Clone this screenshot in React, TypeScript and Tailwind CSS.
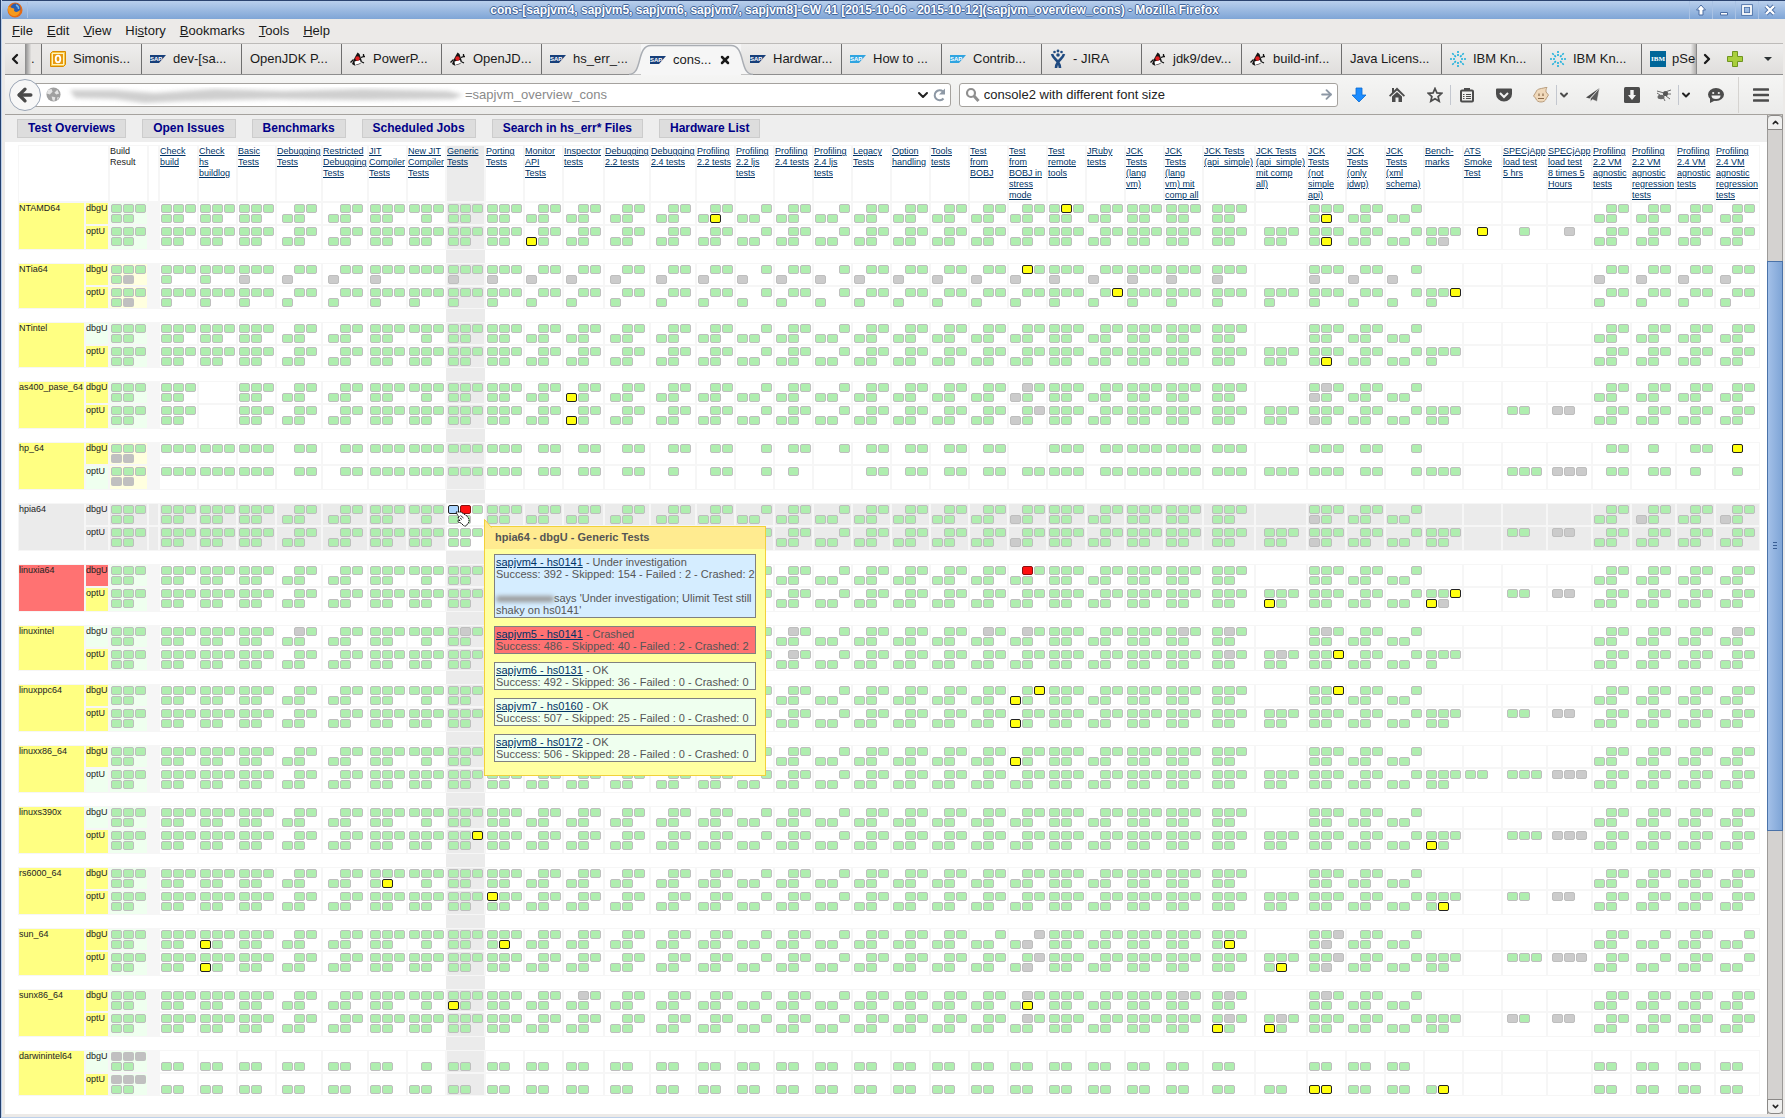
import React from "react";
import { ArrowLeft, ChevronDown, ChevronLeft, ChevronRight, ChevronUp, X } from "lucide-react";

/* ---------- test matrix data ---------- */

// Slots of a cell: sapjvm4, sapjvm5, sapjvm6 / sapjvm7, sapjvm8.
// g = ok, y = warning, r = crashed, b = under investigation, x = not run, X = not built, - = nothing
type Column = { key: string; label: string; width: string; dbg: string; opt: string };

const W39 = "w-[39px]";
const W46 = "w-[46px]";
const FULL = "ggggg";
const NO4 = "-gggg";
const NO45 = "--ggg";

const columns: Column[] = [
  { key: "check", label: "Check\nbuild", width: W39, dbg: FULL, opt: FULL },
  { key: "hs", label: "Check\nhs\nbuildlog", width: W39, dbg: FULL, opt: FULL },
  { key: "basic", label: "Basic\nTests", width: W39, dbg: FULL, opt: FULL },
  { key: "debugging", label: "Debugging\nTests", width: W46, dbg: NO4, opt: NO4 },
  { key: "restricted", label: "Restricted\nDebugging\nTests", width: W46, dbg: NO4, opt: NO4 },
  { key: "jit", label: "JIT\nCompiler\nTests", width: W39, dbg: FULL, opt: FULL },
  { key: "newjit", label: "New JIT\nCompiler\nTests", width: W39, dbg: "ggg-g", opt: FULL },
  { key: "generic", label: "Generic\nTests", width: W39, dbg: FULL, opt: FULL },
  { key: "porting", label: "Porting\nTests", width: W39, dbg: FULL, opt: FULL },
  { key: "monitor", label: "Monitor\nAPI\nTests", width: W39, dbg: NO4, opt: NO4 },
  { key: "inspector", label: "Inspector\ntests", width: "w-[41px]", dbg: NO4, opt: NO4 },
  { key: "dbg22", label: "Debugging\n2.2 tests", width: W46, dbg: NO4, opt: NO4 },
  { key: "dbg24", label: "Debugging\n2.4 tests", width: W46, dbg: NO4, opt: NO4 },
  { key: "p22", label: "Profiling\n2.2 tests", width: W39, dbg: NO4, opt: NO4 },
  { key: "p22l", label: "Profiling\n2.2 ljs\ntests", width: W39, dbg: NO45, opt: NO45 },
  { key: "p24", label: "Profiling\n2.4 tests", width: W39, dbg: NO4, opt: NO4 },
  { key: "p24l", label: "Profiling\n2.4 ljs\ntests", width: W39, dbg: NO45, opt: NO45 },
  { key: "legacy", label: "Legacy\nTests", width: W39, dbg: NO4, opt: NO4 },
  { key: "option", label: "Option\nhandling", width: W39, dbg: NO4, opt: NO4 },
  { key: "tools", label: "Tools\ntests", width: W39, dbg: NO4, opt: NO4 },
  { key: "bobj", label: "Test\nfrom\nBOBJ", width: W39, dbg: NO4, opt: NO4 },
  { key: "stress", label: "Test\nfrom\nBOBJ in\nstress\nmode", width: W39, dbg: NO4, opt: NO4 },
  { key: "remote", label: "Test\nremote\ntools", width: W39, dbg: FULL, opt: FULL },
  { key: "jruby", label: "JRuby\ntests", width: W39, dbg: NO4, opt: NO4 },
  { key: "lang", label: "JCK\nTests\n(lang\nvm)", width: W39, dbg: FULL, opt: FULL },
  { key: "langcomp", label: "JCK\nTests\n(lang\nvm) mit\ncomp all", width: W39, dbg: FULL, opt: FULL },
  { key: "api", label: "JCK Tests\n(api_simple)", width: "w-[52px]", dbg: FULL, opt: FULL },
  { key: "apicomp", label: "JCK Tests\n(api_simple)\nmit comp\nall)", width: "w-[52px]", dbg: "-----", opt: FULL },
  { key: "notsimple", label: "JCK\nTests\n(not\nsimple\napi)", width: W39, dbg: FULL, opt: FULL },
  { key: "jdwp", label: "JCK\nTests\n(only\njdwp)", width: W39, dbg: NO4, opt: NO4 },
  { key: "xml", label: "JCK\nTests\n(xml\nschema)", width: W39, dbg: NO45, opt: NO45 },
  { key: "bench", label: "Bench-\nmarks", width: W39, dbg: "-----", opt: FULL },
  { key: "ats", label: "ATS\nSmoke\nTest", width: W39, dbg: "-----", opt: "-----" },
  { key: "spec5", label: "SPECjApp\nload test\n5 hrs", width: "w-[45px]", dbg: "-----", opt: "-----" },
  { key: "spec8", label: "SPECjApp\nload test\n8 times 5\nHours", width: "w-[45px]", dbg: "-----", opt: "-----" },
  { key: "vm22", label: "Profiling\n2.2 VM\nagnostic\ntests", width: W39, dbg: NO4, opt: NO4 },
  { key: "reg22", label: "Profiling\n2.2 VM\nagnostic\nregression\ntests", width: "w-[45px]", dbg: NO4, opt: NO4 },
  { key: "vm24", label: "Profiling\n2.4 VM\nagnostic\ntests", width: W39, dbg: NO4, opt: NO4 },
  { key: "reg24", label: "Profiling\n2.4 VM\nagnostic\nregression\ntests", width: "w-[45px]", dbg: NO4, opt: NO4 },
];

type Overrides = Record<string, string>;
type Platform = {
  name: string;
  tint: string;
  dbgTint: string;
  optTint: string;
  build?: string;
  buildTint?: string;
  mask?: string;
  short?: boolean;
  hovered?: boolean;
  dbg: Overrides;
  opt: Overrides;
};

const YEL = "bg-[#ffff82]";
const GRN = "bg-[#efffef]";
const RED = "bg-[#ff7272]";
const GRY = "bg-[#ebebeb]";
const CREAM = "bg-[#ffffdf]";

const same = (keys: string[], pattern: string): Overrides =>
  Object.fromEntries(keys.map((k) => [k, pattern]));

const platforms: Platform[] = [
  {
    name: "NTAMD64", tint: YEL, dbgTint: YEL, optTint: YEL,
    dbg: { p22: "-gggy", remote: "gyggg", notsimple: "ggggy" },
    opt: { monitor: "-ggyg", notsimple: "ggggy", bench: "ggggx", ats: "-y---", spec5: "-g---", spec8: "-x---" },
  },
  {
    name: "NTia64", tint: YEL, dbgTint: YEL, optTint: YEL, build: "ggggX", buildTint: CREAM, mask: "11110", short: true,
    dbg: {
      newjit: "ggg--",
      ...same(["basic", "jit", "generic", "porting", "remote", "lang", "langcomp", "api", "notsimple"], "gggx-"),
      ...same(["debugging", "restricted", "monitor", "inspector", "dbg22", "dbg24", "p22", "p24", "legacy", "option", "tools", "bobj", "jruby", "jdwp", "vm22", "reg22", "vm24", "reg24"], "-ggx-"),
      ...same(["p22l", "p24l", "xml"], "--gx-"),
      stress: "-ygx-",
    },
    opt: { jruby: "-gyg-", bench: "ggyg-" },
  },
  {
    name: "NTintel", tint: YEL, dbgTint: GRN, optTint: YEL, short: true,
    dbg: {},
    opt: { notsimple: "ggggy", bench: "gggg-" },
  },
  {
    name: "as400_pase_64", tint: YEL, dbgTint: YEL, optTint: YEL,
    dbg: { hs: "-----", inspector: "-ggyg", stress: "-xgxg", notsimple: "gxgxg" },
    opt: { hs: "-----", inspector: "-ggyg", stress: "-gxxg", notsimple: "gggxg", spec5: "gg---", spec8: "xx---" },
  },
  {
    name: "hp_64", tint: YEL, dbgTint: YEL, optTint: GRN, build: "gggXX", buildTint: CREAM, mask: "11100",
    dbg: { stress: "-----", reg22: "-g---", reg24: "-y---" },
    opt: { dbg24: "-g---", p24: "-g---", p24l: "-----", spec5: "ggg--", spec8: "xxx--", vm24: "-g---", reg24: "-g---" },
  },
  {
    name: "hpia64", tint: GRY, dbgTint: GRY, optTint: GRY, buildTint: GRY, hovered: true,
    dbg: { generic: "brggg", stress: "-ggxg", notsimple: "gggxg", reg22: "-ggxg", reg24: "-ggxg" },
    opt: { stress: "-ggxg", notsimple: "gggxg", spec5: "gg---", spec8: "xx---" },
  },
  {
    name: "linuxia64", tint: RED, dbgTint: RED, optTint: YEL,
    dbg: { stress: "-rggg" },
    opt: { apicomp: "gggyg", bench: "ggyyx", spec5: "gg---", spec8: "xx---" },
  },
  {
    name: "linuxintel", tint: YEL, dbgTint: GRN, optTint: YEL, short: true,
    dbg: { debugging: "-xggg", generic: "gxggg", p24: "-xggg", bobj: "-xggg", stress: "-xggg", langcomp: "gxggg", api: "gxggg", notsimple: "gxggg", reg24: "-xggg" },
    opt: { p24: "-xggg", api: "gxggg", apicomp: "gxggg", notsimple: "ggygg", bench: "gggg-" },
  },
  {
    name: "linuxppc64", tint: YEL, dbgTint: YEL, optTint: YEL,
    dbg: { stress: "-gyyg", notsimple: "ggygg" },
    opt: { stress: "-ggyg", spec5: "gg---", spec8: "xx---" },
  },
  {
    name: "linuxx86_64", tint: YEL, dbgTint: YEL, optTint: GRN,
    dbg: { stress: "-ggyg" },
    opt: { ats: "gg---", spec5: "ggg--", spec8: "xxx--" },
  },
  {
    name: "linuxs390x", tint: YEL, dbgTint: GRN, optTint: YEL,
    dbg: {},
    opt: { generic: "ggygg", bench: "gggyg", spec5: "ggg--", spec8: "xxx--" },
  },
  {
    name: "rs6000_64", tint: YEL, dbgTint: YEL, optTint: YEL,
    dbg: { jit: "ggggy" },
    opt: { porting: "ygggg", bench: "ggggy", spec5: "gg---", spec8: "xx---" },
  },
  {
    name: "sun_64", tint: YEL, dbgTint: YEL, optTint: YEL,
    dbg: { hs: "gggyg", porting: "ggggy", bobj: "--ggg", stress: "--xgx", api: "ggggy", notsimple: "ggxgx", reg22: "--ggg", reg24: "--ggg" },
    opt: { hs: "gggyg", stress: "-gxgx", apicomp: "ggggy", notsimple: "ggxgx", reg22: "--ggg", reg24: "--ggg", spec5: "ggg--", spec8: "xxx--" },
  },
  {
    name: "sunx86_64", tint: YEL, dbgTint: YEL, optTint: YEL,
    dbg: { generic: "gggyg", inspector: "-xggg", stress: "-xggy", langcomp: "gxggg", api: "gxggg", notsimple: "gxggg" },
    opt: { stress: "-xggg", api: "gxgyg", apicomp: "gxgyg", spec5: "xg---", spec8: "xx---" },
  },
  {
    name: "darwinintel64", tint: YEL, dbgTint: GRN, optTint: YEL, build: "XXXgg", mask: "00011", short: true,
    dbg: {},
    opt: { notsimple: "---yy", bench: "---gy" },
  },
];

function patternFor(p: Platform, c: Column, cfg: "dbg" | "opt") {
  const own = p[cfg][c.key];
  if (own) return own;
  const base = c[cfg];
  if (!p.mask) return base;
  return base.split("").map((ch, i) => (p.mask![i] === "1" ? ch : "-")).join("");
}

const dotStyle: Record<string, string> = {
  g: "h-[9px] rounded-[2px] border border-[#bebebe] bg-[#afeeaf]",
  y: "h-[9px] rounded-[2px] border border-[#222222] bg-[#ffff10]",
  r: "h-[9px] rounded-[2px] border border-[#8a1010] bg-[#ff1010]",
  b: "h-[9px] rounded-[2px] border border-[#222222] bg-[#add6ff]",
  x: "h-[9px] rounded-[2px] border border-[#bebebe] bg-[#cbcbcb]",
  X: "h-[9px] rounded-[2px] bg-[#c0c0c0]",
  "-": "h-[9px]",
};

function Dots({ pattern }: { pattern: string }) {
  if (pattern === "-----") return null;
  return (
    <div className="mx-auto grid w-[35px] grid-cols-3 gap-px pt-px">
      {pattern.split("").map((ch, i) => (
        <span key={i} className={dotStyle[ch]} />
      ))}
    </div>
  );
}

/* ---------- hover card ---------- */

const results = [
  { jvm: "sapjvm4 - hs0141", state: "Under investigation", counts: "Success: 392 - Skipped: 154 - Failed : 2 - Crashed: 2", bg: "bg-[#d5edff]", note: true },
  { jvm: "sapjvm5 - hs0141", state: "Crashed", counts: "Success: 486 - Skipped: 40 - Failed : 2 - Crashed: 2", bg: "bg-[#ff7272]" },
  { jvm: "sapjvm6 - hs0131", state: "OK", counts: "Success: 492 - Skipped: 36 - Failed : 0 - Crashed: 0", bg: "bg-[#efffef]" },
  { jvm: "sapjvm7 - hs0160", state: "OK", counts: "Success: 507 - Skipped: 25 - Failed : 0 - Crashed: 0", bg: "bg-[#efffef]" },
  { jvm: "sapjvm8 - hs0172", state: "OK", counts: "Success: 506 - Skipped: 28 - Failed : 0 - Crashed: 0", bg: "bg-[#efffef]" },
];

function HoverCard() {
  return (
    <div role="tooltip" className="absolute left-full top-[22px] z-20 w-[282px] border border-[#f2d13a] bg-[#ffffa0] pb-[13px] text-left text-[11px] leading-[12px] text-[#555555]">
      <svg className="absolute -left-px -top-2 h-[9px] w-2" viewBox="0 0 8 9">
        <path d="M0.5 9V0.5L7.5 8.5V9z" fill="#ffe98c" />
        <path d="M0.5 9V0.5L7.5 8.5" fill="none" stroke="#f2d13a" />
      </svg>
      <h2 className="h-[22px] bg-[#ffeb90] pl-[10px] pt-[3px] font-bold leading-[14px]">hpia64 - dbgU - Generic Tests</h2>
      <div className="flex flex-col gap-2 px-[9px] pt-[5px]">
        {results.map((r) => (
          <div key={r.jvm} className={`whitespace-nowrap border border-[#808080] p-px ${r.bg}`}>
            <div>
              <a href="#result" className="text-[#003366] underline">{r.jvm}</a> - {r.state}
            </div>
            <div>{r.counts}</div>
            {r.note && (
              <div className="pt-3">
                <span className="inline-block h-[6px] w-[58px] rounded-full bg-[#999999] align-middle blur-[2px]" />
                says 'Under investigation; Ulimit Test still
                <br />
                shaky on hs0141'
              </div>
            )}
          </div>
        ))}
      </div>
    </div>
  );
}

function HandCursor() {
  return (
    <svg className="absolute left-2 top-[7px] z-10 h-[17px] w-[16px]" viewBox="0 0 16 17">
      <path
        d="M1 1h5l3 2 3 2 2 3v3l-3 4-2 0-3-3-3-1v-1.500h2L3.500 8 3 6.500 4.500 6 3 4.500 2 3z"
        fill="#ffffff" stroke="#000000" strokeWidth="1" strokeDasharray="1.500 0.600"
      />
      <path d="M5.500 4.500l3 2.500M5 7l2 1.500" stroke="#000000" strokeWidth="0.800" />
    </svg>
  );
}

/* ---------- matrix ---------- */

const LINE = "border border-[#f6f6f6] p-0";

function ConfigRow({ p, cfg }: { p: Platform; cfg: "dbg" | "opt" }) {
  const tall = cfg === "opt" && !p.short;
  return (
    <tr className={tall ? "h-[25px]" : "h-[23px]"}>
      {cfg === "dbg" && (
        <th rowSpan={2} scope="rowgroup" className={`${LINE} ${p.tint} whitespace-nowrap text-left align-top font-normal`}>
          {p.name}
        </th>
      )}
      <th scope="row" className={`${LINE} ${cfg === "dbg" ? p.dbgTint : p.optTint} whitespace-nowrap text-left align-top font-normal`}>
        {cfg === "dbg" ? "dbgU" : "optU"}
      </th>
      <td className={`${LINE} ${p.buildTint ?? GRN} align-top`}>
        <Dots pattern={p.build ?? FULL} />
      </td>
      <td className={`${LINE} ${p.hovered ? GRY : "bg-[#f6f6f6]"}`} />
      {columns.map((c) => {
        const isGeneric = c.key === "generic";
        const gray = isGeneric !== Boolean(p.hovered);
        const target = isGeneric && p.hovered && cfg === "dbg";
        return (
          <td key={c.key} className={`${LINE} align-top ${gray ? GRY : "bg-white"} ${target ? "relative" : ""}`}>
            <Dots pattern={patternFor(p, c, cfg)} />
            {target && <HandCursor />}
            {target && <HoverCard />}
          </td>
        );
      })}
    </tr>
  );
}

function Matrix() {
  return (
    <table className="w-full table-fixed border-separate border-spacing-0 text-[9px] leading-[11px] text-[#222222]">
      <colgroup>
        <col className="w-[67px]" />
        <col className="w-[24px]" />
        <col className="w-[39px]" />
        <col className="w-[11px]" />
        {columns.map((c) => (
          <col key={c.key} className={c.width} />
        ))}
      </colgroup>
      <thead>
        <tr className="h-[56px] whitespace-pre text-left align-top">
          <th colSpan={2} className={LINE} />
          <th scope="col" className={`${LINE} font-normal`}>{"Build\nResult"}</th>
          <th className={LINE} />
          {columns.map((c) => (
            <th key={c.key} scope="col" className={`${LINE} font-normal ${c.key === "generic" ? GRY : ""}`}>
              <a href={`#${c.key}`} className="text-[#003366] underline">{c.label}</a>
            </th>
          ))}
        </tr>
      </thead>
      {platforms.map((p, i) => (
        <tbody key={p.name}>
          {i > 0 && (
            <tr className="h-[13px]">
              <td colSpan={11} className="p-0" />
              <td className={`${GRY} p-0`} />
              <td colSpan={31} className="p-0" />
            </tr>
          )}
          <ConfigRow p={p} cfg="dbg" />
          <ConfigRow p={p} cfg="opt" />
        </tbody>
      ))}
    </table>
  );
}

/* ---------- favicons ---------- */

function Sap({ light }: { light?: boolean }) {
  return (
    <svg className="h-4 w-4 shrink-0" viewBox="0 0 16 16">
      <path d="M0 4h16l-7 8H0z" fill={light ? "#2fa4e0" : "#173f7a"} />
      <text x="0" y="10" fontSize="6" fontWeight="bold" fontFamily="Liberation Sans, sans-serif" fill="#ffffff">SAP</text>
    </svg>
  );
}

function Duke() {
  return (
    <svg className="h-4 w-4 shrink-0" viewBox="0 0 16 16">
      <path d="M7.500 1.500L9.500 3 12 10.500l-2 2.500-5.500 1.500L2 13l2.500-6z" fill="#111111" />
      <path d="M4.500 10.500l5.500-1.500 1 3-6 2z" fill="#ffffff" />
      <path d="M3.500 8.500L0.500 11.500M11 6.500l2.500-1V3M13.500 5.500h1.500M12 11l2 1" stroke="#111111" strokeWidth="1.300" fill="none" />
      <circle cx="7.500" cy="7.500" r="2.200" fill="#e02020" />
    </svg>
  );
}

function Outlook() {
  return (
    <svg className="h-4 w-4 shrink-0" viewBox="0 0 16 16">
      <path d="M2.500 0.500h13v13l-2 2h-13v-13z" fill="#f7c948" stroke="#d98a00" />
      <rect x="2.500" y="2.500" width="11" height="11" fill="#e89a10" stroke="#fff3c0" />
      <ellipse cx="8" cy="8" rx="2.300" ry="3.300" fill="none" stroke="#ffffff" strokeWidth="1.800" />
    </svg>
  );
}

function Jira() {
  return (
    <svg className="h-5 w-4 shrink-0" viewBox="0 0 16 20">
      <g fill="#1f4a80">
        <circle cx="8" cy="2" r="1.400" />
        <circle cx="4.500" cy="3" r="1.300" />
        <circle cx="11.500" cy="3" r="1.300" />
        <circle cx="8" cy="6" r="1.800" />
      </g>
      <path d="M2 5c1 4 4 5 6 8 2 3 2 4 2 6M14 5c-1 4-4 5-6 8-2 3-2 4-2 6" fill="none" stroke="#1f4a80" strokeWidth="2.600" />
    </svg>
  );
}

function IbmRays() {
  return (
    <svg className="h-4 w-4 shrink-0" viewBox="0 0 16 16">
      <g stroke="#1cb0dc" strokeWidth="1.600" strokeDasharray="2 1">
        <path d="M8 0v5M8 16v-5M0 8h5M16 8h-5M2.300 2.300L6 6M13.700 13.700L10 10M2.300 13.700L6 10M13.700 2.300L10 6" />
      </g>
    </svg>
  );
}

function Ibm() {
  return (
    <span className="flex h-4 w-4 shrink-0 items-center justify-center bg-[#006699] font-['Liberation_Serif',serif] text-[7px] font-bold text-white">IBM</span>
  );
}

const tabs: { icon?: React.ReactNode; label: string; active?: boolean; edge?: boolean }[] = [
  { icon: <Outlook />, label: "Simonis..." },
  { icon: <Sap />, label: "dev-[sa..." },
  { label: "OpenJDK P..." },
  { icon: <Duke />, label: "PowerP..." },
  { icon: <Duke />, label: "OpenJD..." },
  { icon: <Sap />, label: "hs_err_..." },
  { icon: <Sap />, label: "cons...", active: true },
  { icon: <Sap />, label: "Hardwar...", edge: true },
  { icon: <Sap light />, label: "How to ..." },
  { icon: <Sap light />, label: "Contrib..." },
  { icon: <Jira />, label: "- JIRA" },
  { icon: <Duke />, label: "jdk9/dev..." },
  { icon: <Duke />, label: "build-inf..." },
  { label: "Java Licens..." },
  { icon: <IbmRays />, label: "IBM Kn..." },
  { icon: <IbmRays />, label: "IBM Kn..." },
];

function TabStrip() {
  return (
    <div role="tablist" className="flex h-[31px] items-stretch border-b border-[#8e8e8e] bg-gradient-to-b from-[#efeeed] to-[#e0dedc] text-[13px] text-[#1a1a1a]">
      <button aria-label="Scroll tabs left" className="flex w-5 items-center justify-center">
        <ChevronLeft className="h-4 w-4" strokeWidth={3.5} />
      </button>
      <div className="flex w-4 items-center bg-gradient-to-r from-[#8a8a8a] to-[#e8e6e4] to-40% pl-[6px]">.</div>
      {tabs.map((t, i) =>
        t.active ? (
          <div key={i} className="relative -mb-px flex w-[100px] shrink-0 items-center bg-[#f6f6f6] pl-[9px]">
            <svg className="absolute -left-[12px] top-0 h-[31px] w-[124px]" viewBox="0 0 124 31" fill="none">
              <path d="M0 30.500C14 30.500 7 1.500 22 1.500H102C117 1.500 110 30.500 124 30.500z" fill="#f6f6f6" />
              <path d="M0 30.500C14 30.500 7 1.500 22 1.500H102C117 1.500 110 30.500 124 30.500" stroke="#a9adb3" strokeWidth="1.500" />
            </svg>
            <button role="tab" aria-selected="true" className="relative flex items-center gap-[7px]">
              {t.icon}
              {t.label}
            </button>
            <button aria-label="Close tab" className="relative ml-2 flex items-center">
              <X className="h-3 w-3" strokeWidth={5} />
            </button>
          </div>
        ) : (
          <button
            key={i}
            role="tab"
            className={`flex w-[100px] shrink-0 items-center gap-[7px] whitespace-nowrap pl-2 ${t.edge ? "border-l border-transparent" : "border-l border-[#6e6e6e]"}`}
          >
            {t.icon}
            {t.label}
          </button>
        ),
      )}
      <button role="tab" className="flex min-w-0 flex-1 items-center gap-[6px] overflow-hidden border-l border-r border-l-[#6e6e6e] border-r-[#8a8a8a] bg-gradient-to-l from-[#b0aeac] to-transparent to-10% pl-2">
        <Ibm />
        pSe
      </button>
      <button aria-label="Scroll tabs right" className="flex w-5 items-center justify-center">
        <ChevronRight className="h-4 w-4" strokeWidth={3.5} />
      </button>
      <button aria-label="New tab" className="flex w-9 items-center justify-center">
        <svg className="h-4 w-4" viewBox="0 0 16 16">
          <path d="M5.500 0.500h5v5h5v5h-5v5h-5v-5h-5v-5h5z" fill="#a9cf3c" stroke="#6f9420" />
        </svg>
      </button>
      <button aria-label="List all tabs" className="flex w-[30px] items-center justify-center">
        <svg className="h-1 w-2" viewBox="0 0 8 4"><path d="M0 0h8L4 4z" fill="#2e3436" /></svg>
      </button>
    </div>
  );
}

function Tool({ name, box, children }: { name: string; box: string; children: React.ReactNode }) {
  return (
    <button aria-label={name} className={`flex h-5 shrink-0 items-center justify-center ${box}`}>
      {children}
    </button>
  );
}

const ICON = "h-4 w-4";

function NavBar() {
  return (
    <div className="flex h-10 items-center border-b border-[#a5a29e] bg-gradient-to-b from-[#f5f5f4] to-[#ebebea] pl-1 pr-[6px] text-[13px]">
      <button aria-label="Back" className="z-10 flex h-8 w-8 shrink-0 items-center justify-center rounded-full border border-[#9aa5b5] bg-[#f7f7f7] text-[#4a4a4a]">
        <ArrowLeft className="h-5 w-5" strokeWidth={4} />
      </button>
      <div className="-ml-2 flex h-6 flex-[920] items-center rounded-r-[3px] border border-[#a5a29e] bg-white pl-3 pr-[3px]">
        <svg className="h-[15px] w-[15px] shrink-0" viewBox="0 0 16 16">
          <circle cx="8" cy="8" r="7.500" fill="#a0a0a0" />
          <path d="M2 3l4-1 1 3-3 3-3-1zM9 6l3-3 2 4-3 1zM6 10l4 1-1 4-2-1zM12 11l2 0-2 3z" fill="#e4e4e4" />
        </svg>
        <svg className="ml-1 h-6 w-[400px] shrink-0" viewBox="0 0 402 24" preserveAspectRatio="none">
          <defs><filter id="smear"><feGaussianBlur stdDeviation="2" /></filter></defs>
          <path d="M5 7L50 7 90 10 150 6 220 8 300 6 385 8 400 12 390 16 300 17 210 16 120 18 80 20 50 16 10 15z" fill="#cfcfcf" filter="url(#smear)" />
        </svg>
        <input aria-label="Address" defaultValue="=sapjvm_overview_cons" className="min-w-0 flex-1 bg-transparent text-[#8a8a8a] outline-none" />
        <ChevronDown className="h-4 w-4 shrink-0 text-[#222222]" strokeWidth={3} />
        <svg className="h-4 w-4 shrink-0" viewBox="0 0 16 16" fill="none">
          <path d="M12.500 11.500A5 5 0 1 1 12 4.500" stroke="#8d98a5" strokeWidth="2" />
          <path d="M14 1.500v6H8z" fill="#8d98a5" />
        </svg>
      </div>
      <div className="ml-2 flex h-6 flex-[377] items-center rounded-[3px] border border-[#a5a29e] bg-white pl-[5px] pr-[3px]">
        <svg className="h-4 w-4 shrink-0" viewBox="0 0 16 16" fill="none">
          <circle cx="6" cy="6" r="4" stroke="#8f8f8f" strokeWidth="2.200" />
          <path d="M9 9l4.500 5" stroke="#8f8f8f" strokeWidth="3" />
        </svg>
        <input aria-label="Search" defaultValue="console2 with different font size" className="min-w-0 flex-1 bg-transparent pl-[3px] text-[#222222] outline-none" />
        <ArrowLeft className="h-[15px] w-[15px] shrink-0 rotate-180 text-[#8d98a5]" strokeWidth={3} />
      </div>
      <div className="flex h-full shrink-0 items-center text-[#4c4c4c]">
        <Tool name="Downloads" box="w-[41px]">
          <svg className={ICON} viewBox="0 0 16 16"><path d="M5 1h6v7h4l-7 7-7-7h4z" fill="#1b8cff" stroke="#0a6ad0" strokeWidth="0.800" /></svg>
        </Tool>
        <Tool name="Home" box="w-9">
          <svg className={ICON} viewBox="0 0 16 16">
            <path d="M8 0.500L16 8.500l-1.200 1.200L8 3.500 1.200 9.700 0 8.500l3-3V1h2v2.500z" fill="#4c4c4c" />
            <path d="M3 9.500l5-4.500 5 4.500V15H9.500v-4.500h-3V15H3z" fill="#4c4c4c" />
          </svg>
        </Tool>
        <Tool name="Bookmark" box="ml-[5px] w-[31px] border-r border-[#c3c7cf]">
          <svg className={ICON} viewBox="0 0 16 16"><path d="M8 1.500l1.900 4.400 4.800.4-3.600 3.200 1.100 4.700L8 11.700l-4.200 2.500 1.100-4.700L1.300 6.300l4.800-.4z" fill="none" stroke="#4c4c4c" strokeWidth="1.700" /></svg>
        </Tool>
        <Tool name="Bookmarks list" box="w-[31px]">
          <svg className={ICON} viewBox="0 0 16 16" fill="none" stroke="#4c4c4c">
            <rect x="2" y="3.500" width="12" height="11" rx="1" strokeWidth="2" />
            <path d="M5 2.500h6" strokeWidth="3" />
            <path d="M4 7.500h1.500M4 9.500h1.500M4 11.500h1.500M7 7.500h5M7 9.500h5M7 11.500h5" strokeWidth="1.200" />
          </svg>
        </Tool>
        <Tool name="Pocket" box="w-11">
          <svg className={ICON} viewBox="0 0 16 16">
            <path d="M1 1.500h14a1 1 0 0 1 1 1V7a8 7.500 0 0 1-16 0V2.500a1 1 0 0 1 1-1z" fill="#4c4c4c" />
            <path d="M4 6l4 4 4-4" fill="none" stroke="#f2f2f2" strokeWidth="2" />
          </svg>
        </Tool>
        <Tool name="Scripts" box="w-[31px] border-r border-[#c3c7cf]">
          <svg className={ICON} viewBox="0 0 16 16">
            <path d="M3 5C4 1 9 2 14 0c-1 2-1 3-1 5l2.500 3-2 3c-1 3-3 4-5.500 4s-4.500-1-5.500-4l-2-2z" fill="#f0d9bb" stroke="#a98b68" strokeWidth="0.800" />
            <path d="M6 6.500v2.500M10 6.500v2.500M5 11.500h6" stroke="#8a6a4a" strokeWidth="1.200" />
          </svg>
        </Tool>
        <Tool name="Scripts menu" box="w-[14px]"><ChevronDown className="h-3 w-3" strokeWidth={4} /></Tool>
        <Tool name="Send page" box="w-11">
          <svg className={ICON} viewBox="0 0 16 16">
            <path d="M14.500 1L1 10.500l3.500 1z" fill="#4c4c4c" />
            <path d="M14.500 1L5.500 11.500v3l2-2 4.500 2z" fill="#5c5c5c" stroke="#f0f0f0" strokeWidth="0.500" />
          </svg>
        </Tool>
        <Tool name="Save" box="w-[34px]">
          <svg className={ICON} viewBox="0 0 16 16">
            <rect width="16" height="16" rx="1.500" fill="#4c4c4c" />
            <path d="M6.300 3h3.400v5H12l-4 5-4-5h2.300z" fill="#f4f4f4" />
          </svg>
        </Tool>
        <Tool name="Firebug" box="w-[30px] border-r border-[#c3c7cf]">
          <svg className={ICON} viewBox="0 0 16 16">
            <ellipse cx="5" cy="10" rx="3.500" ry="2.200" fill="#6a6a6a" />
            <circle cx="9.500" cy="6.500" r="2.600" fill="#555555" />
            <path d="M8 6L1 4M9 5l6-2M11 7l4 0M10 9l4 3M7 10l2 4M4 8L1 6" stroke="#6a6a6a" />
          </svg>
        </Tool>
        <Tool name="Firebug menu" box="w-[14px]"><ChevronDown className="h-3 w-3 text-[#222222]" strokeWidth={4} /></Tool>
        <Tool name="Chat" box="w-[45px]">
          <svg className={ICON} viewBox="0 0 16 16">
            <ellipse cx="8" cy="7.500" rx="8" ry="6.500" fill="#4c4c4c" />
            <path d="M2 11v5l6-3z" fill="#4c4c4c" />
            <circle cx="5.200" cy="6" r="1.100" fill="#f2f2f2" />
            <circle cx="10.800" cy="6" r="1.100" fill="#f2f2f2" />
            <path d="M3.500 8.500h9a4.500 3.500 0 0 1-9 0z" fill="#f2f2f2" />
          </svg>
        </Tool>
        <span className="h-9 w-px bg-[#d5d3d0]" />
        <Tool name="Menu" box="ml-[6px] w-8">
          <svg className={ICON} viewBox="0 0 16 16"><path d="M1 2.500h14M1 8h14M1 13.500h14" stroke="#4c4c4c" strokeWidth="2.600" strokeLinecap="round" /></svg>
        </Tool>
      </div>
    </div>
  );
}

const menus = [["", "F", "ile"], ["", "E", "dit"], ["", "V", "iew"], ["Hi", "s", "tory"], ["", "B", "ookmarks"], ["", "T", "ools"], ["", "H", "elp"]];

function TitleBar() {
  return (
    <header className="flex h-[19px] items-center border-t border-[#2c4470] bg-gradient-to-b from-[#b9cfec] to-[#7fa5d6]">
      <span className="flex w-[26px] shrink-0 justify-center border-r border-[#a9c2e4]">
        <svg className="h-4 w-4" viewBox="0 0 16 16">
          <circle cx="8" cy="8" r="7.500" fill="#e56a14" />
          <circle cx="8.500" cy="6.500" r="5" fill="#2a5db0" />
          <path d="M9 3c2 1 3 2 2.500 4" stroke="#6fb6ee" strokeWidth="1.500" fill="none" />
          <path d="M1 4c1 1 3 1 4 2 2 0 3 1 2 2 0 2 3 3 6 0 0 4-3 6-6 6s-6-3-6-7z" fill="#f59a1c" />
        </svg>
      </span>
      <h1 className="flex-1 pr-2 text-center text-[12px] font-bold leading-[18px] text-white [text-shadow:1px_0_0_#41659b,-1px_0_0_#41659b,0_1px_0_#41659b,0_-1px_0_#41659b]">
        cons-[sapjvm4, sapjvm5, sapjvm6, sapjvm7, sapjvm8]-CW 41 [2015-10-06 - 2015-10-12](sapjvm_overview_cons) - Mozilla Firefox
      </h1>
      <div className="flex h-full pr-1">
        <button aria-label="Shade" className="flex w-[23px] items-center justify-center border-l border-[#a9c2e4]">
          <svg className="h-3 w-3" viewBox="0 0 12 12"><path d="M6 1l4.500 5H8v5H4V6H1.500z" fill="#ffffff" stroke="#4a6da3" /></svg>
        </button>
        <button aria-label="Minimize" className="flex w-[23px] items-center justify-center border-l border-[#a9c2e4]">
          <svg className="h-3 w-3" viewBox="0 0 12 12"><path d="M2.500 8.500h7v2.500h-7z" fill="#ffffff" stroke="#4a6da3" /></svg>
        </button>
        <button aria-label="Maximize" className="flex w-[23px] items-center justify-center border-l border-[#a9c2e4]">
          <svg className="h-3 w-3" viewBox="0 0 12 12" fill="none"><rect x="2" y="2" width="8" height="8" stroke="#4a6da3" strokeWidth="3.500" /><rect x="2" y="2" width="8" height="8" stroke="#ffffff" strokeWidth="1.800" /></svg>
        </button>
        <button aria-label="Close" className="flex w-[23px] items-center justify-center border-l border-[#a9c2e4]">
          <svg className="h-3 w-3" viewBox="0 0 12 12" fill="none"><path d="M2 2l8 8M10 2l-8 8" stroke="#4a6da3" strokeWidth="4" /><path d="M2 2l8 8M10 2l-8 8" stroke="#ffffff" strokeWidth="2.400" /></svg>
        </button>
      </div>
    </header>
  );
}

const pageLinks = ["Test Overviews", "Open Issues", "Benchmarks", "Scheduled Jobs", "Search in hs_err* Files", "Hardware List"];

function ScrollBar() {
  return (
    <div className="flex w-4 shrink-0 flex-col border-x border-[#9c9a98] bg-[#d4d2d0]">
      <button aria-label="Scroll up" className="-mx-px flex h-[15px] items-center justify-center rounded-t border border-[#8a8886] bg-[#efefee]">
        <ChevronUp className="h-[9px] w-[9px] text-[#222222]" strokeWidth={4} />
      </button>
      <div className="flex-[131]" />
      <div className="-mx-px flex flex-[570] flex-col items-center justify-center gap-[2px] border border-[#4a72a8] bg-gradient-to-r from-[#a3c0e8] to-[#7fa5d6]">
        <span className="h-px w-1 bg-[#3a5f95]" />
        <span className="h-px w-1 bg-[#3a5f95]" />
        <span className="h-px w-1 bg-[#3a5f95]" />
      </div>
      <div className="flex-[269]" />
      <button aria-label="Scroll down" className="-mx-px flex h-[15px] items-center justify-center rounded-b border border-[#8a8886] bg-[#efefee]">
        <ChevronDown className="h-[9px] w-[9px] text-[#222222]" strokeWidth={4} />
      </button>
    </div>
  );
}

export default function App() {
  return (
    <div className="flex min-h-screen flex-col border-b border-l border-[#24406e] bg-[#eceae8] font-['Liberation_Sans',Arial,sans-serif]">
      <div className="flex flex-1 flex-col border-b border-l border-[#bcd0ea]">
        <TitleBar />
        <div className="flex flex-1 flex-col pb-[3px] pl-[3px] pr-[2px]">
          <nav className="flex h-[25px] items-center gap-[14px] border-b border-[#bdbbb9] pl-[7px] text-[13px] text-[#1a1a1a]">
            {menus.map(([a, u, b]) => (
              <button key={u + b}>{a}<u>{u}</u>{b}</button>
            ))}
          </nav>
          <TabStrip />
          <NavBar />
          <div className="flex flex-1">
            <main className="min-w-0 flex-1 bg-white pb-[18px]">
              <nav className="flex h-[27px] items-center gap-4 bg-[#eeeeee] pl-3 text-[12px] font-bold">
                {pageLinks.map((l) => (
                  <a key={l} href="#page" className="border border-[#cccccc] bg-[#dddddd] px-[10px] py-px leading-[15px] text-[#000088]">{l}</a>
                ))}
              </nav>
              <div className="pl-[13px] pr-2 pt-[3px]">
                <Matrix />
              </div>
            </main>
            <ScrollBar />
          </div>
        </div>
      </div>
    </div>
  );
}
